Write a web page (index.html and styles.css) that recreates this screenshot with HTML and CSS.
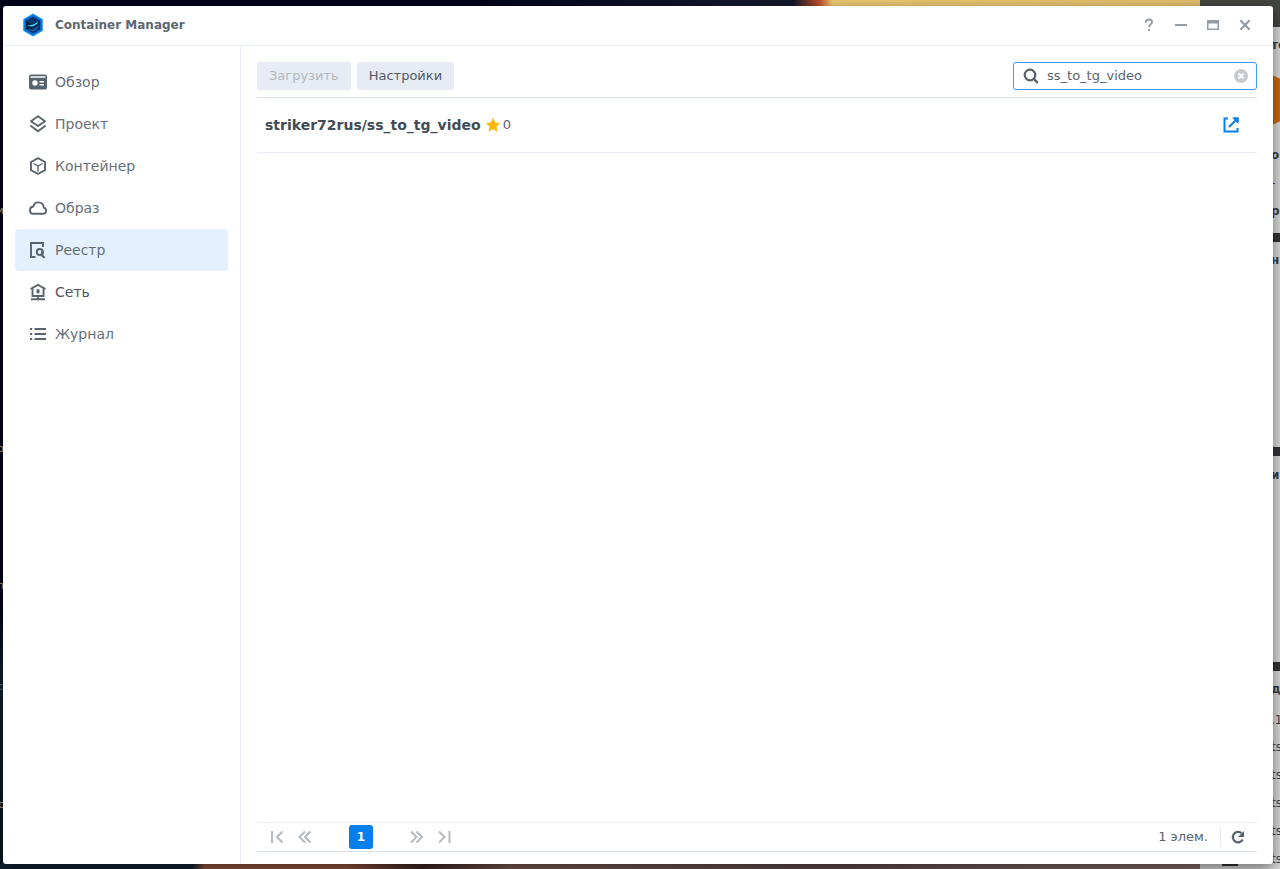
FILE: index.html
```html
<!DOCTYPE html>
<html lang="ru">
<head>
<meta charset="utf-8">
<title>Container Manager</title>
<link rel="stylesheet" href="styles.css">
</head>
<body class="desktop">
<div class="wallpaper" aria-hidden="true">
  <span class="label label-1">и</span>
  <span class="label label-2">о</span>
  <span class="label label-3">п</span>
  <span class="label label-4">с</span>
  <span class="label label-5">с</span>
</div>
<div class="back-window" aria-hidden="true">
  <div class="back-title"></div>
  <svg class="back-hexagon" width="60" height="56" viewBox="0 0 60 56"><path d="M0 12 22 0l38 18v20L22 56 0 44z" fill="#cb6a0c"/></svg>
  <span class="bar bar-1"></span><span class="bar bar-2"></span><span class="bar bar-3"></span>
  <span class="piece strong p1">то</span>
  <span class="piece strong p2">ор</span>
  <span class="piece p3">-</span>
  <span class="piece strong p4">ра</span>
  <span class="piece strong p5">н</span>
  <span class="piece strong p6">ик</span>
  <span class="piece strong p7">дк</span>
  <span class="piece p8">.1</span>
  <span class="piece p9">ts</span>
  <span class="piece p10">ts</span>
  <span class="piece p11">ts</span>
  <span class="piece p12">ts</span>
  <span class="piece p13">ts</span>
  <span class="back-chip"></span>
</div>
<div class="window">
  <header class="titlebar">
    <svg class="logo" width="22" height="24" viewBox="0 0 22 24">
      <path d="M11 1.500 20 6.600v10.800L11 22.500 2 17.400V6.600z" fill="#0b5fc4" stroke="#0a8cea" stroke-width="1.500" stroke-linejoin="round"/>
      <path d="M11 4 18 8v8l-7 4-7-4V8z" fill="#06264a"/>
      <path d="M4 8l7-4 7 4-7 4.500z" fill="#07376b"/>
      <path d="M5.500 12c3.500 1 7-.5 11-4-1 3.500-4 5.500-7 5.500-2 0-3.500-.5-4-1.500z" fill="#16a8ea"/>
      <path d="M6 16c3.500 1.500 8-.5 11-4-.5 3.500-3.500 6.500-6.500 6.300C8.500 18.200 6.500 17 6 16z" fill="#0c63b5"/>
      <path d="M8 12.500c3 .3 5-.8 7-2.700" fill="none" stroke="#48dbe8" stroke-width="1"/>
    </svg>
    <h1 class="title">Container Manager</h1>
    <div class="controls">
      <button class="control" type="button" aria-label="Справка"><svg width="16" height="16" viewBox="0 0 16 16"><path d="M5 5.500V5c0-1.700 1.200-2.500 3-2.500s3 .8 3 2.500c0 2.200-3 2.600-3 5.200" fill="none" stroke="currentColor" stroke-width="2"/><path d="M7 12h2v2H7z" fill="currentColor"/></svg></button>
      <button class="control" type="button" aria-label="Свернуть"><svg width="16" height="16" viewBox="0 0 16 16"><path d="M2 7h12v2H2z" fill="currentColor"/></svg></button>
      <button class="control" type="button" aria-label="Развернуть"><svg width="16" height="16" viewBox="0 0 16 16"><path d="M2 3h12v10H2zm1.500 3.500v5h9v-5z" fill="currentColor" fill-rule="evenodd"/></svg></button>
      <button class="control" type="button" aria-label="Закрыть"><svg width="16" height="16" viewBox="0 0 16 16"><path d="M3.300 3.300l9.400 9.400M12.700 3.300l-9.400 9.400" fill="none" stroke="currentColor" stroke-width="2.200"/></svg></button>
    </div>
  </header>
  <div class="body">
    <nav class="sidebar">
      <a class="item" href="#overview"><svg class="icon" viewBox="0 0 18 18"><path d="M2 1.500h14a2 2 0 0 1 2 2v11a2 2 0 0 1-2 2H2a2 2 0 0 1-2-2v-11a2 2 0 0 1 2-2zM1.500 3.300v1.500h15V3.300zM6 7.300a2.700 2.700 0 1 0 0 5.400 2.700 2.700 0 0 0 0-5.400zM10.500 8v1.500H15V8zm0 3v1.500H15V11z" fill="currentColor" fill-rule="evenodd"/></svg>Обзор</a>
      <a class="item" href="#project"><svg class="icon" viewBox="0 0 18 18"><path d="M9 1.300 16 6.300 9 11 2 6.300zM2 11l7 5.200 7-5.200" fill="none" stroke="currentColor" stroke-width="1.900" stroke-linejoin="round" stroke-linecap="round"/></svg>Проект</a>
      <a class="item" href="#container"><svg class="icon" viewBox="0 0 18 18"><path d="M9 1.200 16 5v8.200L9 17l-7-3.800V5z" fill="none" stroke="currentColor" stroke-width="1.900" stroke-linejoin="round"/><path d="M4.500 6.500 9 9l4.500-2.500M9 9v5.500" fill="none" stroke="currentColor" stroke-width="1.400"/></svg>Контейнер</a>
      <a class="item" href="#image"><svg class="icon" viewBox="0 0 18 18"><path d="M4.500 14.800h9.500a3.100 3.100 0 0 0 .8-6.100C14.500 5.500 12.200 3.400 9.300 3.400c-2.500 0-4.500 1.600-5 4.100C2.300 7.700 1 9.300 1 11.200c0 2.100 1.400 3.600 3.500 3.600z" fill="none" stroke="currentColor" stroke-width="1.900" stroke-linejoin="round"/></svg>Образ</a>
      <a class="item active" href="#registry" aria-current="page"><svg class="icon" viewBox="0 0 18 18"><path d="M6.500 16H2V2h12v4" fill="none" stroke="currentColor" stroke-width="1.900"/><circle cx="10.800" cy="11" r="3" fill="none" stroke="currentColor" stroke-width="2"/><path d="M13.300 10v4.800l2.200 2" fill="none" stroke="currentColor" stroke-width="2.200"/></svg>Реестр</a>
      <a class="item dark" href="#network"><svg class="icon" viewBox="0 0 18 18"><path d="M1.500 6 9 1.800 16.500 6M3.500 5.500v7.500h11V5.500M9 13v3M2 16.200h14" fill="none" stroke="currentColor" stroke-width="1.900"/><path d="M7.500 6.300h3v4h-3z" fill="currentColor"/></svg>Сеть</a>
      <a class="item" href="#log"><svg class="icon" viewBox="0 0 18 18"><path d="M1 4h2.200M1 9h2.200M1 14h2.200M5.500 4H17M5.500 9H17M5.500 14H17" fill="none" stroke="currentColor" stroke-width="2"/></svg>Журнал</a>
    </nav>
    <main class="content">
      <div class="toolbar">
        <button class="button" type="button" disabled>Загрузить</button>
        <button class="button" type="button">Настройки</button>
        <div class="search">
          <svg width="16" height="16" viewBox="0 0 16 16"><circle cx="7" cy="7" r="5.300" fill="none" stroke="currentColor" stroke-width="2.200"/><path d="M10.800 10.800l4 4" stroke="currentColor" stroke-width="2.400"/></svg>
          <input class="search-input" type="text" value="ss_to_tg_video" aria-label="Поиск">
          <button class="clear" type="button" aria-label="Очистить"><svg width="14" height="14" viewBox="0 0 14 14"><circle cx="7" cy="7" r="7" fill="#c6cad0"/><path d="M4.500 4.500l5 5M9.500 4.500l-5 5" stroke="#fff" stroke-width="1.800"/></svg></button>
        </div>
      </div>
      <div class="row">
        <strong class="name">striker72rus/ss_to_tg_video</strong>
        <svg class="star" width="16" height="16" viewBox="0 0 16 16"><path d="M8 .8l2.200 4.700 5 .6-3.700 3.500 1 5.200L8 12.200l-4.500 2.600 1-5.200L.8 6.100l5-.6z" fill="#fdb90a"/></svg>
        <span class="count">0</span>
        <a class="open" href="#open" aria-label="Открыть"><svg width="16" height="16" viewBox="0 0 16 16"><path d="M5 1.500H1.500v13h13V11M11 1.500h3.500V5" fill="none" stroke="currentColor" stroke-width="2"/><path d="M6 10l7.500-7.500" stroke="currentColor" stroke-width="2"/><path d="M9 .5h6.500V7z" fill="currentColor"/></svg></a>
      </div>
      <footer class="pager">
        <div class="pages">
          <button class="step" type="button" aria-label="Первая"><svg width="16" height="16" viewBox="0 0 16 16"><path d="M3 2v12M13.500 2.500 8 8l5.500 5.500"/></svg></button>
          <button class="step" type="button" aria-label="Назад"><svg width="16" height="16" viewBox="0 0 16 16"><path d="M8 2.500 2.500 8 8 13.500M13.500 2.500 8 8l5.500 5.500"/></svg></button>
          <button class="page" type="button" aria-current="page">1</button>
          <button class="step" type="button" aria-label="Вперёд"><svg width="16" height="16" viewBox="0 0 16 16"><path d="M2 2.500 7.500 8 2 13.500M7.500 2.500 13 8l-5.500 5.500"/></svg></button>
          <button class="step" type="button" aria-label="Последняя"><svg width="16" height="16" viewBox="0 0 16 16"><path d="M12.500 2v12M2 2.500 7.500 8 2 13.500"/></svg></button>
        </div>
        <span class="total">1 элем.</span>
        <button class="refresh" type="button" aria-label="Обновить"><svg width="14" height="14" viewBox="0 0 14 14"><path d="M11.700 9.500A5.200 5.200 0 1 1 10.500 3.200" fill="none" stroke="currentColor" stroke-width="2.200"/><path d="M13 1v6H7z" fill="currentColor"/></svg></button>
      </footer>
    </main>
  </div>
</div>
</body>
</html>
```
FILE: styles.css
```css
* { box-sizing: border-box; }

.desktop {
  position: relative;
  display: flex;
  min-height: 100vh;
  margin: 0;
  padding: 6px 7px 5px 3px;
  overflow: hidden;
  background: #02031a;
  color: #59636d;
  font: 13px/20px Verdana, "DejaVu Sans", sans-serif;
}

button { font: inherit; color: inherit; border: 0; padding: 0; background: none; }
svg { display: block; flex: none; }

.wallpaper {
  position: absolute;
  inset: 0;
  background:
    linear-gradient(100deg, #14192a 0 62%, #c2502a 64%, #eec873 65%, #e4bd6b 100%) 0 0 / 100% 6px no-repeat,
    linear-gradient(90deg, #0e2230 0 15%, #93543f 16% 27%, #3c2424 33%, #7b5a52 40%, #5c4a4d 65%, #74605f 80%, #8a706a 100%) 0 100% / 100% 5px no-repeat,
    linear-gradient(#01021a 0 70%, #0e2232 78%, #071522 100%);
}
.wallpaper::before {
  content: "";
  position: absolute;
  top: 0;
  left: 0;
  width: 60%;
  height: 6px;
  background: linear-gradient(90deg, #02031a 60%, #02031a00);
}
.label { position: absolute; right: calc(100% - 4px); font-size: 11px; color: #b9a28c; }
.label-1 { top: 201px; }
.label-2 { top: 439px; }
.label-3 { top: 576px; }
.label-4 { top: 677px; color: #527184; }
.label-5 { top: 795px; }

.back-window {
  position: absolute;
  top: 0;
  right: 0;
  bottom: 0;
  width: 80px;
  overflow: hidden;
  background: #d8d8d8;
}
.back-title { height: 27px; background: #444740; }
.back-hexagon { position: absolute; left: 44px; top: 72px; }
.bar { position: absolute; left: 0; right: 0; height: 9px; background: #343438; }
.bar-1 { top: 233px; }
.bar-2 { top: 447px; }
.bar-3 { top: 662px; }
.piece { position: absolute; left: 71px; font-size: 12px; color: #3a4047; white-space: nowrap; }
.strong { font-weight: bold; }
.p1 { top: 35px; }
.p2 { top: 145px; }
.p3 { top: 173px; }
.p4 { top: 201px; }
.p5 { top: 250px; }
.p6 { top: 465px; }
.p7 { top: 679px; }
.p8 { top: 710px; }
.p9 { top: 737px; color: #2c4a63; }
.p10 { top: 765px; color: #2c4a63; }
.p11 { top: 793px; color: #2c4a63; }
.p12 { top: 821px; color: #2c4a63; }
.p13 { top: 849px; color: #2c4a63; }
.back-chip { position: absolute; left: 22px; bottom: 3px; width: 16px; height: 8px; background: #343438; }

.window {
  position: relative;
  display: flex;
  flex: 1;
  flex-direction: column;
  min-width: 0;
  border-radius: 3px;
  background: #fff;
  box-shadow: 0 4px 14px #00000080;
}

.titlebar {
  display: flex;
  align-items: center;
  gap: 11px;
  height: 40px;
  padding: 0 20px 1px 19px;
  border-bottom: 1px solid #e8eef5;
}
.title { margin: 0; font-size: 12px; line-height: 20px; font-weight: bold; color: #5c666f; }
.controls { display: flex; gap: 16px; margin-left: auto; color: #949ca5; }

.body { display: flex; flex: 1; }

.sidebar {
  display: flex;
  flex-direction: column;
  width: 238px;
  padding: 15px 12px;
  border-right: 1px solid #e6edf4;
}
.item {
  display: flex;
  align-items: center;
  gap: 8px;
  height: 42px;
  padding: 0 14px;
  border-radius: 4px;
  font-size: 14px;
  color: #66707a;
  text-decoration: none;
}
.active { background: #e4f0fd; }
.dark { color: #4c5660; }
.icon { width: 18px; height: 18px; color: #59636d; }

.content { display: flex; flex: 1; flex-direction: column; min-width: 0; padding: 16px 16px 12px; }

.toolbar { display: flex; gap: 6px; padding-bottom: 7px; border-bottom: 1px solid #d8e1e8; }
.button { height: 28px; padding: 0 12px; border-radius: 3px; background: #e7ecf4; color: #505a64; }
.button:disabled { color: #b0b8c2; }
.search {
  display: flex;
  align-items: center;
  gap: 8px;
  width: 244px;
  height: 28px;
  margin-left: auto;
  padding: 0 8px 0 9px;
  border: 1px solid #3d9bf3;
  border-radius: 3px;
}
.search-input {
  flex: 1;
  min-width: 0;
  padding: 0;
  border: 0;
  outline: 0;
  background: none;
  color: #59636d;
  font: inherit;
}

.row { display: flex; align-items: center; height: 55px; padding: 0 18px 0 8px; border-bottom: 1px solid #e4ebf2; }
.name { font-size: 14px; color: #414b55; }
.star { margin: 0 2px 0 4px; }
.open { margin-left: auto; color: #057feb; }

.pager {
  display: flex;
  align-items: center;
  height: 30px;
  margin-top: auto;
  padding: 0 12px;
  border-top: 1px solid #e4ebf2;
  border-bottom: 1px solid #d4dfe6;
}
.pages { display: flex; align-items: center; gap: 12px; }
.step svg { fill: none; stroke: #b5bac0; stroke-width: 2; }
.page { width: 24px; height: 24px; margin: 0 24px; border-radius: 3px; background: #057feb; color: #fff; font-size: 12px; font-weight: bold; }
.total { margin-left: auto; }
.refresh { margin-left: 12px; padding: 3px 0 3px 10px; border-left: 1px solid #e4ebf2; }
```
